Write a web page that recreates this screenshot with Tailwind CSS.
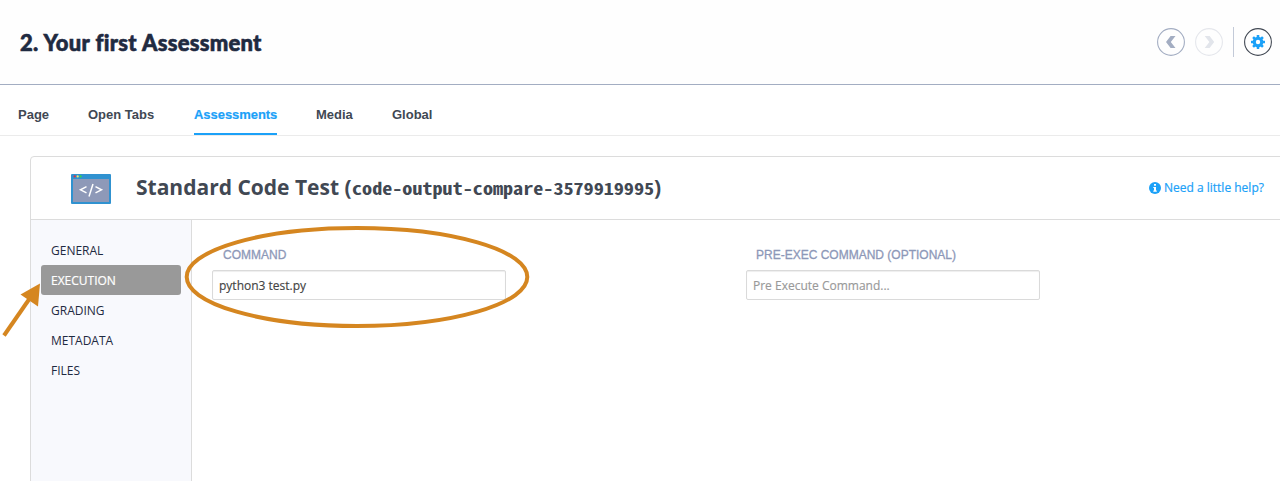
<!DOCTYPE html>
<html lang="en">
<head>
<meta charset="utf-8">
<title>Assessments</title>
<script src="https://cdn.jsdelivr.net/npm/@tailwindcss/browser@4"></script>
</head>
<body class="relative h-[481px] overflow-hidden bg-white font-['Open_Sans',sans-serif]">
<header class="flex h-[85px] items-center justify-between border-b border-[#a3adc2] bg-[#fefefe] pl-5 pr-2">
  <h1 class="mt-px whitespace-nowrap font-['Lato',sans-serif] text-[22px] font-black tracking-[0.25px] [word-spacing:0.5px] text-[#1f2a41] [-webkit-text-stroke:0.6px_#1f2a41]">2. Your first Assessment</h1>
  <div class="flex items-center">
    <svg class="h-7 w-7" viewBox="0 0 28 28" fill="none"><circle cx="14" cy="14" r="13.4" stroke="#a3adc2" stroke-width="1.1"/><path d="M13.6 8h4.9l-4.7 6 4.7 6h-4.9L9 14z" fill="#a3adc2"/></svg>
    <svg class="ml-[10px] h-7 w-7" viewBox="0 0 28 28" fill="none"><circle cx="14" cy="14" r="13.4" stroke="#e5e7ec" stroke-width="1.1"/><path d="M14.6 8H9.7l4.7 6-4.7 6h4.9l4.6-6z" fill="#e2e5eb"/></svg>
    <div class="ml-[10px] h-[30px] w-px bg-[#c3cad8]"></div>
    <svg class="ml-[10px] h-7 w-7" viewBox="0 0 28 28" fill="none"><circle cx="14" cy="14" r="13.4" stroke="#414853" stroke-width="1.1"/><g fill="#1ba1f8"><circle cx="14" cy="14" r="5.3"/><rect x="12.7" y="7" width="2.6" height="14" rx=".4"/><rect x="12.7" y="7" width="2.6" height="14" rx=".4" transform="rotate(45 14 14)"/><rect x="12.7" y="7" width="2.6" height="14" rx=".4" transform="rotate(90 14 14)"/><rect x="12.7" y="7" width="2.6" height="14" rx=".4" transform="rotate(135 14 14)"/></g><circle cx="14" cy="14" r="2.2" fill="white"/></svg>
  </div>
</header>
<nav class="flex h-[51px] border-b border-[#ebebeb] pl-[18px] font-['Liberation_Sans',sans-serif] text-[13px] font-bold leading-[60px] text-[#414853]">
  <a class="w-[70px]">Page</a>
  <a class="w-[106px]">Open Tabs</a>
  <a class="h-[50px] w-[83px] whitespace-nowrap border-b-2 border-[#1ba1f8] tracking-[-0.05px] text-[#1ba1f8] [-webkit-text-stroke:0.2px_#1ba1f8]">Assessments</a>
  <a class="ml-[39px] w-[76px]">Media</a>
  <a>Global</a>
</nav>
<main class="ml-[30px] mt-5 h-[340px] w-[1270px] rounded-tl border border-[#dcdcdc]">
  <div class="flex h-[63px] items-center border-b border-[#dcdcdc] pl-10">
    <svg class="mt-px h-[30px] w-10 shrink-0" viewBox="0 0 40 30"><rect width="40" height="30" rx="1" fill="#3092d0"/><rect x="2" y="5" width="36" height="23" fill="#8e99b8"/><circle cx="3.7" cy="2.4" r="1.1" fill="#e22b3e"/><circle cx="6.7" cy="2.4" r="1.1" fill="#f4e36b"/><circle cx="9.6" cy="2.4" r="1.1" fill="#36d848"/><path d="M15.5 12.7l-6 3.1 6 3.1M24.5 12.7l6 3.1-6 3.1M22 10l-4 12.5" fill="none" stroke="white" stroke-width="1.5"/></svg>
    <h2 class="ml-[25px] flex w-[600px] shrink-0 items-baseline whitespace-nowrap text-[21px] font-bold text-[#414853]"><span class="w-[216px]">Standard Code Test (</span><span class="w-[302px] font-['Noto_Sans_Mono_CJK_SC','DejaVu_Sans_Mono',monospace] text-[16.8px] leading-7"><span class="inline-block origin-left scale-x-[1.2]">code-output-compare-3579919995</span></span><span>)</span></h2>
    <a class="ml-[413px] flex items-center whitespace-nowrap text-[12px] text-[#1ba1f8] [-webkit-text-stroke:0.2px_#1ba1f8]"><svg class="mr-[3px] h-3 w-3" viewBox="0 0 12 12"><circle cx="6" cy="6" r="6" fill="#1ba1f8"/><path d="M5 2h2v1.7H5zM4.3 4.9H7v3.6h.8v1.2H4.3V8.5H5V6h-.7z" fill="white"/></svg>Need a little help?</a>
  </div>
  <div class="flex h-[280px]">
    <aside class="w-[161px] border-r border-[#dcdcdc] bg-[#f8f9fd] px-[10px] pt-[15px] text-[12px] leading-8 text-[#1f2a41]">
      <div class="h-[30px] pl-[10px]">GENERAL</div>
      <div class="h-[30px] rounded-[3px] bg-[#999] pl-[10px] text-white [-webkit-text-stroke:0.2px_white]">EXECUTION</div>
      <div class="h-[30px] pl-[10px]">GRADING</div>
      <div class="h-[30px] pl-[10px]">METADATA</div>
      <div class="h-[30px] pl-[10px]">FILES</div>
    </aside>
    <section class="flex pl-5 pt-[25px]">
      <label class="w-[534px]"><span class="block h-[25px] pl-[11px] font-['Liberation_Sans',sans-serif] text-[12px] leading-5 text-[#8d98b8] [-webkit-text-stroke:0.3px_#8d98b8]">COMMAND</span><span class="block h-[30px] w-[294px] rounded-[2px] border border-[#dadada] pl-1.5 text-[12px] leading-[29px] text-[#444] shadow-[inset_0_1px_1px_#eee] [-webkit-text-stroke:0.15px_#444]">python3 test.py</span></label>
      <label class="w-[294px]"><span class="block h-[25px] pl-[10px] font-['Liberation_Sans',sans-serif] text-[12px] leading-5 text-[#8d98b8] [-webkit-text-stroke:0.3px_#8d98b8]">PRE-EXEC COMMAND (OPTIONAL)</span><span class="block h-[30px] w-[294px] rounded-[2px] border border-[#dadada] pl-1.5 text-[12px] leading-[29px] text-[#999] shadow-[inset_0_1px_1px_#eee] [-webkit-text-stroke:0.15px_#999]">Pre Execute Command...</span></label>
    </section>
  </div>
</main>
<svg class="pointer-events-none absolute left-0 top-0 h-[481px] w-[1280px]" viewBox="0 0 1280 481" fill="none"><ellipse cx="357" cy="277" rx="170.3" ry="49" stroke="#d58620" stroke-width="4"/><path d="M4 335.5L30 298" stroke="#d58620" stroke-width="4"/><path d="M40 283.5L20.5 294.5L38 306.5z" fill="#d58620"/></svg>
</body>
</html>
